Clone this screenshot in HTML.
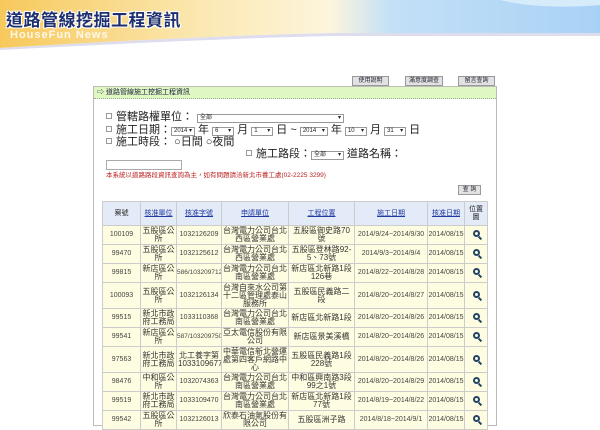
<!DOCTYPE html>
<html><head><meta charset="utf-8"><style>
*{margin:0;padding:0;box-sizing:border-box}
body{width:600px;height:420px;overflow:hidden;background:#fff;font-family:"Liberation Sans","Noto Sans CJK TC",sans-serif;position:relative}
.ban{position:absolute;left:0;top:0;width:600px;height:50px}
.title{position:absolute;left:6px;top:6px;font-size:17px;font-weight:bold;color:#1d2f6e;letter-spacing:0.5px;text-shadow:1px 1px 0 #fff,-1px -1px 0 #fff,1px -1px 0 #fff,-1px 1px 0 #fff}
.hf{position:absolute;left:10px;top:29px;font-size:11px;font-weight:bold;color:#fff;opacity:.85;letter-spacing:1px}
.btn{position:absolute;top:76px;height:10px;background:#e2e2e2;border:1px solid #999;font-size:6px;color:#223;text-align:center;line-height:8px}
.panel{position:absolute;left:93px;top:86px;width:404px;height:340px;border:1px solid #bbb}
.ph{height:12px;background:#dff7c0;border-bottom:1px dotted #9a9;font-size:7px;line-height:12px;padding-left:3px;color:#224}
.f{position:absolute;font-size:11px;line-height:12px;color:#222;white-space:nowrap}
.cb{display:inline-block;width:6px;height:6px;border:1px solid #999;margin-right:4px;vertical-align:1px}
.sel{display:inline-block;border:1px solid #999;height:9px;font-size:6px;line-height:7px;vertical-align:1px;padding-left:2px;position:relative;background:#fff}
.sel:after{content:"▾";position:absolute;right:2px;top:0;font-size:6px}
table{position:absolute;left:102px;top:201px;border-collapse:collapse;width:385px;table-layout:fixed}
td,th{border:1px solid #ccc;font-size:7px;text-align:center;color:#444;line-height:8px;padding:0;background:#fffde1;overflow:hidden}
th{background:#e2ebf7;height:24px;color:#2038a0;text-decoration:underline;font-weight:normal}
th.n{text-decoration:none;color:#222}
td.m{color:#333;font-size:8px;line-height:8px;padding:0 1px}
.mg{display:inline-block;width:7px;height:7px;border:2px solid #246;border-radius:50%;position:relative}
.mg:after{content:"";position:absolute;left:4px;top:4px;width:2px;height:4px;background:#246;transform:rotate(-45deg)}
</style></head><body>
<svg class="ban" viewBox="0 0 600 50">
<defs><linearGradient id="g" x1="0" x2="1"><stop offset="0" stop-color="#f7c95c"/><stop offset=".35" stop-color="#fbe9b5"/><stop offset=".55" stop-color="#fdf5dc"/><stop offset=".65" stop-color="#c4e0f7"/><stop offset="1" stop-color="#a8d2f5"/></linearGradient></defs>
<path d="M0 0H600V33H330Q200 36 0 48Z" fill="url(#g)"/>
<path d="M0 48Q200 36 330 33H600V36H330Q200 39 0 50Z" fill="#dde"/>
<path d="M500 0Q540 10 600 5V0Z" fill="#d7ecfb"/>
</svg>
<div class="title">道路管線挖掘工程資訊</div>
<div class="hf">HouseFun News</div>
<div class="btn" style="left:352px;width:37px">使用說明</div>
<div class="btn" style="left:405px;width:38px">滿意度調查</div>
<div class="btn" style="left:458px;width:37px">留言查詢</div>
<div class="panel"><div class="ph">⇨ 道路管線施工挖掘工程資訊</div></div>
<div class="f" style="left:106px;top:111px"><span class="cb"></span>管轄路權單位：<span class="sel" style="width:147px;margin-left:4px">全部</span></div>
<div class="f" style="left:106px;top:124px"><span class="cb"></span>施工日期：<span class="sel" style="width:24px">2014</span> 年 <span class="sel" style="width:22px">6</span> 月 <span class="sel" style="width:22px">1</span> 日 ~ <span class="sel" style="width:28px">2014</span> 年 <span class="sel" style="width:22px">10</span> 月 <span class="sel" style="width:22px">31</span> 日</div>
<div class="f" style="left:106px;top:136px"><span class="cb"></span>施工時段： ○日間 ○夜間</div>
<div class="f" style="left:246px;top:148px"><span class="cb"></span>施工路段：<span class="sel" style="width:33px">全部</span> 道路名稱：</div>
<div style="position:absolute;left:106px;top:160px;width:76px;height:10px;border:1px solid #aaa"></div>
<div class="f" style="left:106px;top:172px;font-size:6.5px;line-height:8px;color:#b22">本系統以道路路段資訊查詢為主，如有問題請洽新北市養工處(02-2225 3299)</div>
<div class="btn" style="left:458px;top:185px;width:23px">查 詢</div>
<table>
<colgroup><col style="width:38px"><col style="width:36px"><col style="width:45px"><col style="width:67px"><col style="width:66px"><col style="width:73px"><col style="width:37px"><col style="width:23px"></colgroup>
<tr><th class="n">案號</th><th>核准單位</th><th>核准字號</th><th>申請單位</th><th>工程位置</th><th>施工日期</th><th>核准日期</th><th class="n">位置<br>圖</th></tr>
<tr style="height:19px"><td>100109</td><td class="m">五股區公所</td><td>1032126209</td><td class="m">台灣電力公司台北西區營業處</td><td class="m">五股區御史路70號</td><td>2014/9/24~2014/9/30</td><td>2014/08/15</td><td><span class="mg"></span></td></tr>
<tr style="height:19px"><td>99470</td><td class="m">五股區公所</td><td>1032125612</td><td class="m">台灣電力公司台北西區營業處</td><td class="m">五股區登林路92-5、73號</td><td>2014/9/3~2014/9/4</td><td>2014/08/15</td><td><span class="mg"></span></td></tr>
<tr style="height:19px"><td>99815</td><td class="m">新店區公所</td><td style="font-size:6.5px">586/1032097123</td><td class="m">台灣電力公司台北南區營業處</td><td class="m">新店區北新路1段126巷</td><td>2014/8/22~2014/8/28</td><td>2014/08/15</td><td><span class="mg"></span></td></tr>
<tr style="height:26px"><td>100093</td><td class="m">五股區公所</td><td>1032126134</td><td class="m">台灣自來水公司第十二區管理處泰山服務所</td><td class="m">五股區民義路二段</td><td>2014/8/20~2014/8/27</td><td>2014/08/15</td><td><span class="mg"></span></td></tr>
<tr style="height:19px"><td>99515</td><td class="m">新北市政府工務局</td><td>1033110368</td><td class="m">台灣電力公司台北南區營業處</td><td class="m">新店區北新路1段</td><td>2014/8/20~2014/8/26</td><td>2014/08/15</td><td><span class="mg"></span></td></tr>
<tr style="height:19px"><td>99541</td><td class="m">新店區公所</td><td style="font-size:6.5px">587/1032097507</td><td class="m">亞太電信股份有限公司</td><td class="m">新店區景美溪橋</td><td>2014/8/20~2014/8/26</td><td>2014/08/15</td><td><span class="mg"></span></td></tr>
<tr style="height:26px"><td>97563</td><td class="m">新北市政府工務局</td><td class="m">北工養字第1033109677</td><td class="m">中華電信新北營運處第四客戶網路中心</td><td class="m">五股區民義路1段228號</td><td>2014/8/20~2014/8/26</td><td>2014/08/15</td><td><span class="mg"></span></td></tr>
<tr style="height:19px"><td>98476</td><td class="m">中和區公所</td><td>1032074363</td><td class="m">台灣電力公司台北南區營業處</td><td class="m">中和區興南路3段99之1號</td><td>2014/8/20~2014/8/29</td><td>2014/08/15</td><td><span class="mg"></span></td></tr>
<tr style="height:19px"><td>99519</td><td class="m">新北市政府工務局</td><td>1033109470</td><td class="m">台灣電力公司台北南區營業處</td><td class="m">新店區北新路1段77號</td><td>2014/8/19~2014/8/22</td><td>2014/08/15</td><td><span class="mg"></span></td></tr>
<tr style="height:19px"><td>99542</td><td class="m">五股區公所</td><td>1032126013</td><td class="m">欣泰石油氣股份有限公司</td><td class="m">五股區洲子路</td><td>2014/8/18~2014/9/1</td><td>2014/08/15</td><td><span class="mg"></span></td></tr>
</table>
</body></html>
